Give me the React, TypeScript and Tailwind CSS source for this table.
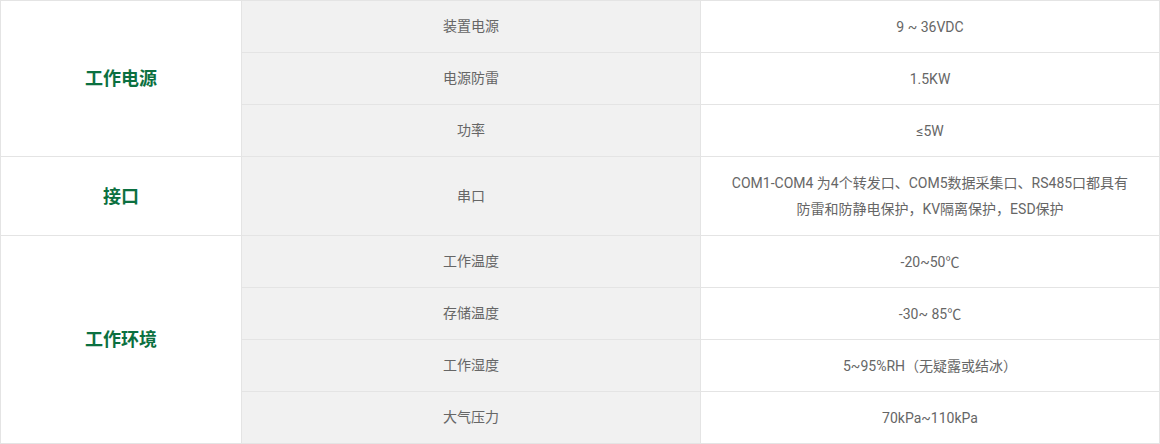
import React from "react";

type Row = { label: string; value: React.ReactNode; tall?: boolean };

const groups: { title: string; rows: Row[] }[] = [
  {
    title: "工作电源",
    rows: [
      { label: "装置电源", value: "9 ~ 36VDC" },
      { label: "电源防雷", value: "1.5KW" },
      { label: "功率", value: "≤5W" },
    ],
  },
  {
    title: "接口",
    rows: [
      {
        label: "串口",
        value: (
          <>
            COM1-COM4 为4个转发口、COM5数据采集口、RS485口都具有
            <br />
            防雷和防静电保护，KV隔离保护，ESD保护
          </>
        ),
        tall: true,
      },
    ],
  },
  {
    title: "工作环境",
    rows: [
      { label: "工作温度", value: "-20~50℃" },
      { label: "存储温度", value: "-30~ 85℃" },
      { label: "工作湿度", value: "5~95%RH（无疑露或结冰）" },
      { label: "大气压力", value: "70kPa~110kPa" },
    ],
  },
];

export default function App() {
  return (
    <div className="w-[1160px] h-[444px] bg-white font-['Roboto','Noto_Sans_CJK_SC',sans-serif]">
      <table className="w-full table-fixed border-collapse border border-[#e4e4e4] text-center">
        <colgroup>
          <col className="w-[241px]" />
          <col className="w-[459px]" />
          <col />
        </colgroup>
        <tbody>
          {groups.map((g) =>
            g.rows.map((r, i) => (
              <tr key={g.title + r.label} className={r.tall ? "h-[79px]" : "h-[52px]"}>
                {i === 0 && (
                  <td
                    rowSpan={g.rows.length}
                    className="border border-[#e4e4e4] text-[18px] font-bold text-[#0b7040]"
                  >
                    {g.title}
                  </td>
                )}
                <td className="border border-[#e4e4e4] bg-[#f1f1f1] text-[14px] text-[#666]">
                  {r.label}
                </td>
                <td className="border border-[#e4e4e4] px-6 text-[14px] leading-[26px] text-[#666]">
                  {r.value}
                </td>
              </tr>
            ))
          )}
        </tbody>
      </table>
    </div>
  );
}
